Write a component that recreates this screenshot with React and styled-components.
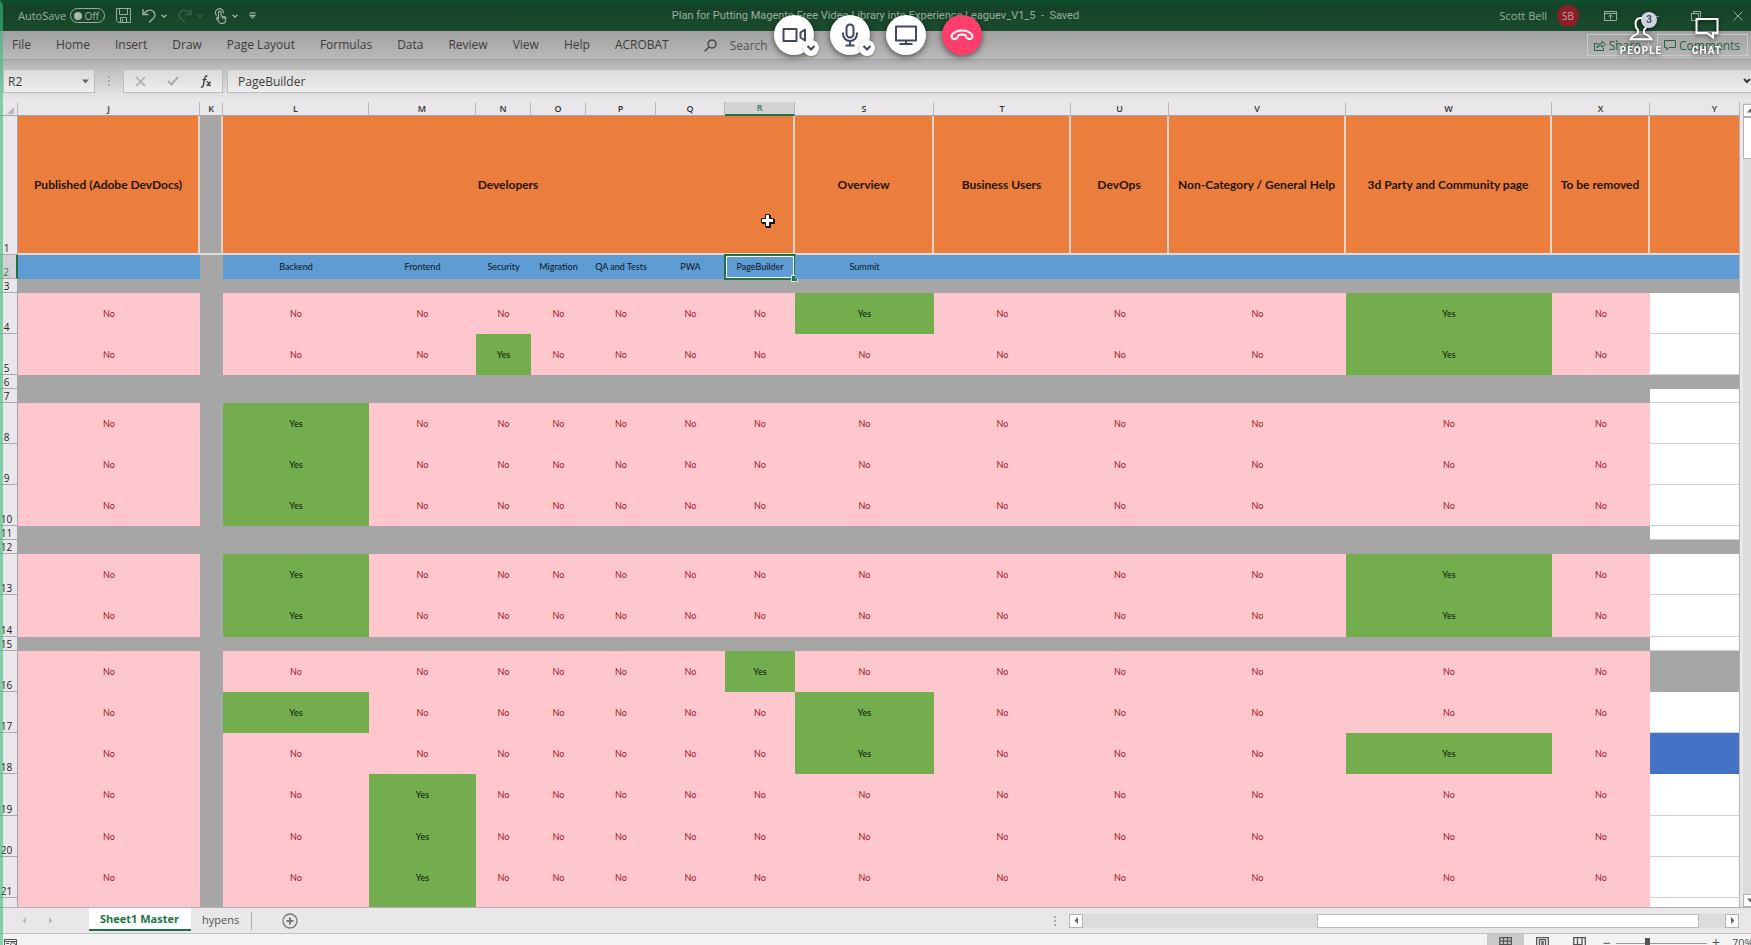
import React from "react";
import styled, { createGlobalStyle, css } from "styled-components";

const GlobalStyle = createGlobalStyle`
  *, *::before, *::after { box-sizing: border-box; }
  body { margin: 0; overflow: hidden; font-family: "Open Sans", "Noto Sans", sans-serif; font-size: 12px; color: #3c3c3c; }
  button, input { font: inherit; color: inherit; margin: 0; }
  button { background: none; border: 0; padding: 0; }
  svg { display: block; flex: none; }
`;

const Window = styled.div`
  position: relative;
  display: flex;
  flex-direction: column;
  height: 100vh;
  overflow: hidden;
  background: #e9e7ea;
`;

const ShareFrame = styled.div`
  position: absolute;
  inset: 0;
  z-index: 5;
  pointer-events: none;
  border-left: 3px solid rgba(60, 190, 125, 0.6);
  border-top: 5px solid rgba(10, 110, 60, 0.3);
`;

/* ---------- title bar ---------- */

const TitleBar = styled.header`
  display: grid;
  grid-template-columns: 1fr auto 1fr;
  align-items: center;
  height: 31px;
  flex: none;
  background: linear-gradient(#143f25, #1b4c2e);
  color: #9aaf9f;
  font-size: 11px;
  line-height: 16px;
`;

const QuickAccess = styled.div`
  display: flex;
  align-items: center;
  gap: 11px;
  padding-left: 18px;
`;

const IconPair = styled.button`
  display: flex;
  align-items: center;
  gap: 5px;
  opacity: ${(p) => (p.$dim ? 0.25 : 1)};
`;

const AutoSave = styled.label`
  display: flex;
  align-items: center;
  gap: 4px;
`;

const Switch = styled.span`
  position: relative;
  display: flex;
  align-items: center;
  justify-content: flex-end;
  width: 35px;
  height: 15px;
  padding-right: 5px;
  border: 1px solid #9aaf9f;
  border-radius: 8px;
  font-size: 10px;
  &::before {
    content: "";
    position: absolute;
    left: 3px;
    width: 8px;
    height: 8px;
    border-radius: 50%;
    background: #a9b9ae;
  }
  input { position: absolute; inset: 0; opacity: 0; }
`;

const DocTitle = styled.h1`
  margin: 0;
  font-family: Roboto, "Open Sans", sans-serif;
  font-size: 11px;
  font-weight: 400;
  white-space: pre;
`;

const Account = styled.div`
  display: flex;
  align-items: center;
  justify-content: flex-end;
  padding-right: 8px;
`;

const Avatar = styled.span`
  display: grid;
  place-items: center;
  width: 22px;
  height: 22px;
  margin: 0 25px 0 10px;
  border-radius: 50%;
  background: #8a1f28;
  color: #c39a9b;
  font-size: 10px;
`;

const WindowButtons = styled.div`
  display: flex;
  align-items: center;
  gap: 32px;
`;

/* ---------- ribbon ---------- */

const Ribbon = styled.nav`
  display: flex;
  align-items: center;
  height: 29px;
  flex: none;
  padding: 0 3px 0 0;
  background: linear-gradient(#a2a0a0, #bab9b9);
  border-bottom: 1px solid #a3a2a3;
`;

const RibbonTab = styled.button`
  padding: 0 13px 0 12px;
  line-height: 20px;
  white-space: nowrap;
`;

const SearchBox = styled.label`
  display: flex;
  align-items: center;
  gap: 13px;
  margin-left: 22px;
  input {
    width: 60px;
    padding: 0;
    border: 0;
    background: none;
    outline: 0;
  }
  input::placeholder { color: #555; opacity: 1; }
`;

const RibbonActions = styled.div`
  display: flex;
  gap: 8px;
  margin-left: auto;
`;

const ActionButton = styled.button`
  display: flex;
  align-items: center;
  gap: 3px;
  height: 22px;
  padding: 0 7px 0 6px;
  border: 1px solid #cbcaca;
  color: #1f6340;
`;

/* ---------- formula bar ---------- */

const FormulaBar = styled.div`
  display: flex;
  align-items: stretch;
  height: 42px;
  flex: none;
  padding: 9px 0 9px 3px;
  background: linear-gradient(#adacae, #bebdc0 20%, #dfdee1 78%, #e9e7ea);
`;

const field = css`
  border: 1px solid #bcbbbd;
  background: linear-gradient(#dadada, #efefef);
`;

const NameBox = styled.div`
  ${field}
  display: flex;
  align-items: center;
  width: 92px;
  padding-right: 5px;
  color: #666;
  input { width: 100%; padding: 0 0 0 4px; border: 0; background: none; outline: 0; color: #3c3c3c; }
`;

const Grip = styled.div`
  display: flex;
  flex-direction: column;
  justify-content: center;
  align-items: center;
  gap: 2px;
  width: 28px;
  i { width: 2px; height: 2px; background: #a9a9ab; }
`;

const FormulaTools = styled.div`
  ${field}
  display: flex;
  align-items: center;
  justify-content: space-between;
  width: 100px;
  padding: 0 10px 0 11px;
`;

const FormulaField = styled.div`
  ${field}
  display: flex;
  align-items: center;
  flex: 1;
  margin-left: 4px;
  border-right: 0;
  input { flex: 1; padding: 0 0 0 10px; border: 0; background: none; outline: 0; }
`;

/* ---------- grid ---------- */

const SheetArea = styled.main`
  display: flex;
  flex: 1;
  min-height: 0;
  border-bottom: 1px solid #b3b2b4;
`;

const SheetView = styled.div`
  flex: 1;
  min-width: 0;
  overflow: hidden;
  border-right: 1px solid #b5b4b6;
`;

const Table = styled.table`
  table-layout: fixed;
  width: 1780px;
  border-collapse: separate;
  border-spacing: 0;
  font-family: Lato, "Open Sans", sans-serif;
  font-size: 9px;
  line-height: 12px;
  td, th { padding: 0; overflow: hidden; white-space: nowrap; text-align: center; }
`;

const ColumnHead = styled.th`
  height: 14px;
  border-right: 1px solid #b9b8bb;
  border-bottom: ${(p) => (p.$active ? "2px solid #217346" : "1px solid #a5a4a6")};
  background: ${(p) => (p.$active ? "#d2d1d4" : "#e9e7ea")};
  color: ${(p) => (p.$active ? "#3b7b57" : "#333")};
  font-family: "Open Sans", sans-serif;
  font-weight: 600;
`;

const RowHead = styled.th`
  height: ${(p) => p.$height}px;
  && { padding-right: 4px; }
  border-right: ${(p) => (p.$active ? "2px solid #217346" : "1px solid #a5a4a6")};
  border-bottom: 1px solid #a9a8aa;
  background: ${(p) => (p.$active ? "#d2d1d4" : "#e9e7ea")};
  color: ${(p) => (p.$active ? "#3b7b57" : "#222")};
  font-family: "Open Sans", sans-serif;
  font-size: 10px;
  font-weight: 400;
  vertical-align: bottom;
`;

const GroupCell = styled.td`
  position: relative;
  border-right: 2px solid #e3d3c9;
  border-bottom: 2px solid #e2dcd9;
  background: ${(p) => (p.$blank ? "#a6a6a6" : "#eb7e3c")};
  color: #24140a;
  font-size: 12px;
  font-weight: 700;
`;

const SubCell = styled.td`
  position: relative;
  background: ${(p) => (p.$blank ? "#a6a6a6" : "#5e9cd3")};
  color: #0a1620;
  ${(p) =>
    p.$selected &&
    css`
      && { overflow: visible; }
      outline: 2px solid #217346;
      outline-offset: -1px;
      box-shadow: inset 0 0 0 2px #fff;
      &::after {
        content: "";
        position: absolute;
        right: -2px;
        bottom: -2px;
        width: 5px;
        height: 5px;
        background: #217346;
        outline: 1px solid #d9e6dd;
      }
    `}
`;

const fills = {
  no: ["#fec7ce", "#a0142a"],
  yes: ["#73ad4e", "#0a1405"],
  gray: ["#a6a6a6", "#a6a6a6"],
  blue: ["#4472c4", "#4472c4"],
  blank: ["#fff", "#333"],
};

const ValueCell = styled.td`
  background: ${(p) => fills[p.$fill][0]};
  color: ${(p) => fills[p.$fill][1]};
  ${(p) => p.$fill === "blank" && "border-bottom: 1px solid #d0d0d2;"}
`;

const MouseCross = styled.svg`
  position: absolute;
  right: 17px;
  bottom: 24px;
`;

/* ---------- scroll bars ---------- */

const VerticalBar = styled.div`
  display: flex;
  flex-direction: column;
  width: 8px;
  margin-left: 3px;
  padding-top: 2px;
  background: #dddbde;
  overflow: hidden;
`;

const ScrollButton = styled.button`
  display: grid;
  place-items: center;
  width: 14px;
  height: ${(p) => p.$height}px;
  flex: none;
  border: 1px solid #b3b2b4;
  background: #fff;
  color: #666;
`;

const VerticalThumb = styled.div`
  width: 14px;
  height: 42px;
  border: 1px solid #b3b2b4;
  background: #fff;
  margin-bottom: auto;
`;

const TabStrip = styled.footer`
  display: flex;
  align-items: center;
  height: 26px;
  flex: none;
  padding: 0 12px 0 3px;
  background: #e9e7ea;
  border-bottom: 1px solid #c1c0c2;
`;

const TabArrows = styled.div`
  display: flex;
  justify-content: space-between;
  width: 86px;
  padding: 0 35px 0 18px;
  color: #bab9bb;
`;

const SheetTab = styled.button`
  align-self: flex-start;
  height: 23px;
  padding: 0 12px 0 11px;
  font-size: 11px;
  line-height: 22px;
  white-space: nowrap;
  color: #555;
  ${(p) =>
    p.$active &&
    css`
      background: #fff;
      border-bottom: 2px solid #217346;
      color: #217346;
      font-weight: 700;
    `}
`;

const AddSheet = styled.button`
  margin-left: 30px;
  color: #77777a;
`;

const TabDivider = styled.span`
  width: 1px;
  height: 18px;
  background: #aaa9ab;
`;

const HorizontalBar = styled.div`
  display: flex;
  align-items: center;
  width: 698px;
  margin-left: auto;
`;

const HorizontalTrack = styled.div`
  display: flex;
  flex: 1;
  justify-content: flex-end;
  height: 14px;
  padding-right: 26px;
  background: #dcdcdc;
`;

const HorizontalThumb = styled.div`
  width: 62%;
  border: 1px solid #b9b8ba;
  background: #fff;
`;

const StatusBar = styled.div`
  display: flex;
  align-items: flex-start;
  justify-content: flex-end;
  height: 11px;
  flex: none;
  overflow: hidden;
  padding: 0 0 0 4px;
  background: #f4f3f3;
  color: #555;
  white-space: nowrap;
`;

const MacroButton = styled.button`
  margin: 4px auto 0 0;
`;

const ViewButton = styled.button`
  display: grid;
  justify-items: center;
  width: 37px;
  height: 22px;
  padding-top: 3px;
  align-content: start;
  background: ${(p) => (p.$active ? "#c9c8ca" : "none")};
`;

const ZoomButton = styled.button`
  width: 18px;
  height: 18px;
  line-height: 18px;
  font-size: 14px;
`;

const ZoomSlider = styled.input`
  appearance: none;
  width: 91px;
  height: 18px;
  background: linear-gradient(#999, #999) center / 100% 1px no-repeat;
  &::-webkit-slider-thumb {
    appearance: none;
    width: 5px;
    height: 10px;
    background: #555;
  }
`;

const ZoomValue = styled.span`
  width: 26px;
  padding-left: 7px;
  line-height: 18px;
  font-size: 11px;
`;

/* ---------- call overlay ---------- */

const CallControls = styled.div`
  position: absolute;
  z-index: 10;
  top: 15px;
  left: 0;
  right: 0;
  display: flex;
  justify-content: center;
  gap: 16px;
  padding-left: 4px;
  pointer-events: none;
`;

const CallItem = styled.div`
  position: relative;
  pointer-events: auto;
`;

const CallButton = styled.button`
  display: grid;
  place-items: center;
  width: 40px;
  height: 40px;
  border-radius: 50%;
  background: ${(p) => (p.$danger ? "#ff3e6c" : "#fff")};
  color: ${(p) => (p.$danger ? "#fff" : "#3f4a5c")};
  box-shadow: 0 2px 6px rgba(0, 0, 0, 0.55);
`;

const CallOptions = styled.button`
  position: absolute;
  right: -5px;
  bottom: -1px;
  display: grid;
  place-items: center;
  width: 16px;
  height: 16px;
  border-radius: 50%;
  background: #fff;
  color: #3f4a5c;
  box-shadow: 0 1px 3px rgba(0, 0, 0, 0.35);
`;

const SidePanelButtons = styled.div`
  position: absolute;
  z-index: 10;
  top: 16px;
  right: 24px;
  display: flex;
  gap: 26px;
`;

const PanelButton = styled.button`
  position: relative;
  display: flex;
  flex-direction: column;
  align-items: center;
  width: 40px;
  color: #fff;
  font-family: Roboto, sans-serif;
  font-size: 10px;
  font-weight: 700;
  letter-spacing: 1px;
  line-height: 12px;
  gap: 3px;
  filter: drop-shadow(0 1px 2px rgba(0, 0, 0, 0.7));
`;

const Badge = styled.span`
  position: absolute;
  top: -4px;
  right: 4px;
  width: 16px;
  height: 16px;
  border-radius: 50%;
  background: #cdd5e0;
  color: #3f4a5c;
  font-size: 10px;
  letter-spacing: 0;
  line-height: 16px;
`;

/* ---------- icons ---------- */

const Icon = ({ w = 16, h = w, box, sw = 1, children, fill = "none" }) => (
  <svg width={w} height={h} viewBox={box || `0 0 ${w} ${h}`} fill={fill} stroke={fill === "none" ? "currentColor" : "none"} strokeWidth={sw} aria-hidden="true">
    {children}
  </svg>
);

const Triangle = ({ dir = "down", w = 7 }) => {
  const d = { down: "M0 1.5h7L3.5 5.5z", up: "M0 5.5h7L3.5 1.5z", left: "M5 0v7L1.5 3.5z", right: "M2 0v7l3.5-3.5z" }[dir];
  return <Icon w={w} box="0 0 7 7" fill="currentColor"><path d={d} /></Icon>;
};

const Caret = () => <Icon w={6} h={4} sw={1.4}><path d="M.5.7 3 3.2 5.5.7" /></Icon>;

/* ---------- data ---------- */

const columns = [
  ["J", 182], ["K", 23], ["L", 146], ["M", 107], ["N", 55], ["O", 55], ["P", 70], ["Q", 69],
  ["R", 70], ["S", 139], ["T", 137], ["U", 98], ["V", 177], ["W", 206], ["X", 98], ["Y", 130],
];

const groups = [
  ["Published (Adobe DevDocs)", 1], ["", 1, true], ["Developers", 7], ["Overview", 1], ["Business Users", 1],
  ["DevOps", 1], ["Non-Category / General Help", 1], ["3d Party and Community page", 1], ["To be removed", 1], ["", 1],
];

const subheads = {
  L: "Backend", M: "Frontend", N: "Security", O: "Migration", P: "QA and Tests", Q: "PWA", R: "PageBuilder", S: "Summit",
};

const rows = [
  { n: 3, band: true, y: "gray" },
  { n: 4, yes: "SW" },
  { n: 5, yes: "NW" },
  { n: 6, band: true, y: "gray" },
  { n: 7, band: true },
  { n: 8, yes: "L" },
  { n: 9, yes: "L" },
  { n: 10, yes: "L" },
  { n: 11, band: true },
  { n: 12, band: true, y: "gray" },
  { n: 13, yes: "LW" },
  { n: 14, yes: "LW", height: 42 },
  { n: 15, band: true },
  { n: 16, yes: "R", y: "gray" },
  { n: 17, yes: "LS" },
  { n: 18, yes: "SW", y: "blue" },
  { n: 19, yes: "M", height: 42 },
  { n: 20, yes: "M" },
  { n: 21, yes: "M" },
  { n: 22, yes: "M" },
];

const fillOf = (row, col) => {
  if (col === "Y") return row.y || "blank";
  if (col === "K" || row.band) return "gray";
  return row.yes.includes(col) ? "yes" : "no";
};

const labels = { yes: "Yes", no: "No" };

const ribbonTabs = ["File", "Home", "Insert", "Draw", "Page Layout", "Formulas", "Data", "Review", "View", "Help", "ACROBAT"];

/* ---------- sections ---------- */

function TopBar() {
  return (
    <TitleBar>
      <QuickAccess>
        <AutoSave>
          AutoSave
          <Switch><input type="checkbox" aria-label="AutoSave" />Off</Switch>
        </AutoSave>
        <IconPair aria-label="Save">
          <Icon w={15}><path d="M.5.5h14v14h-12l-2-2zM3.5.5v6h8v-6M4.5 14.5v-5h6v5M6.5 11v3.500" /></Icon>
        </IconPair>
        <IconPair aria-label="Undo">
          <Icon w={14} h={15} sw={1.4}><path d="M1 1v5.500h5.500M1.300 6.300C4 2.500 8 1 11 3.200c2.500 2 2.500 5 .5 7L7 14.500" /></Icon>
          <Caret />
        </IconPair>
        <IconPair aria-label="Redo" $dim>
          <Icon w={14} h={15} sw={1.4}><path d="M13 1v5.500H7.500M12.700 6.300C10 2.500 6 1 3 3.200c-2.500 2-2.500 5-.5 7L7 14.500" /></Icon>
          <Caret />
        </IconPair>
        <IconPair aria-label="Touch mode">
          <Icon w={13} h={16} sw={1.2}>
            <path d="M4.500 11.500V4.500a1.300 1.300 0 0 1 2.600 0V8l3.400.7c1.200.3 1.500 1 1.300 2l-.6 3c-.2 1-1 1.700-2 1.700H7c-1 0-1.500-.4-2-1.200L2.500 10.800c-.5-1 .6-1.700 1.300-1zM2.500 7.500A4 4 0 1 1 9.300 5.500M8.500 9v2M10.200 9.300v1.700" />
          </Icon>
          <Caret />
        </IconPair>
        <IconPair aria-label="Customize Quick Access Toolbar">
          <Icon w={7} h={7} sw={1.2}><path d="M.5.8h6M1 3.300l2.500 2.500L6 3.300z" /></Icon>
        </IconPair>
      </QuickAccess>
      <DocTitle>{"Plan for Putting Magento Free Video Library into Experience Leaguev_V1_5  -  Saved"}</DocTitle>
      <Account>
        Scott Bell
        <Avatar>SB</Avatar>
        <WindowButtons>
          <button aria-label="Ribbon display options">
            <Icon w={13} h={10}><path d="M.5.5h12v9H.5zM.5 2.500h12M6.500 8.500v-4.500M4.500 5.800l2-2 2 2" /></Icon>
          </button>
          <button aria-label="Minimize"><Icon w={10}><path d="M0 5.500h10" /></Icon></button>
          <button aria-label="Restore"><Icon w={10}><path d="M.5 2.500h7v7h-7zM2.500 2.500v-2h7v7h-2" /></Icon></button>
          <button aria-label="Close"><Icon w={10}><path d="m.5.5 9 9M9.500.5l-9 9" /></Icon></button>
        </WindowButtons>
      </Account>
    </TitleBar>
  );
}

function RibbonBar() {
  return (
    <Ribbon>
      {ribbonTabs.map((t) => <RibbonTab key={t}>{t}</RibbonTab>)}
      <SearchBox>
        <Icon w={13} sw={1.3}><circle cx="8" cy="5" r="4" /><path d="M5 8 .7 12.300" /></Icon>
        <input placeholder="Search" aria-label="Search" />
      </SearchBox>
      <RibbonActions>
        <ActionButton>
          <Icon w={12} h={11}><path d="M4 3.500H.5v7h9V8M3 8c.3-3 2-4.500 5-4.500V1l3.500 3.500L8 7.500V5.500C5.500 5.500 4 6.300 3 8z" /></Icon>
          Share
        </ActionButton>
        <ActionButton>
          <Icon w={12} h={11}><path d="M.5.5h11v7H5L2.500 10V7.500h-2z" /></Icon>
          Comments
        </ActionButton>
      </RibbonActions>
    </Ribbon>
  );
}

function Formula() {
  return (
    <FormulaBar>
      <NameBox><input aria-label="Name box" defaultValue="R2" /><Triangle /></NameBox>
      <Grip><i /><i /><i /></Grip>
      <FormulaTools>
        <button aria-label="Cancel"><Icon w={11} sw={1.5}><path d="m1 1 9 9M10 1l-9 9" stroke="#aaa" /></Icon></button>
        <button aria-label="Enter"><Icon w={12} h={10} sw={2}><path d="m1 5 3.500 3.500L11 1" stroke="#aaa" /></Icon></button>
        <button aria-label="Insert function">
          <Icon w={12} h={13} sw={1.3}><path d="M7.500 1.200C5.500.5 5 2 4.600 4L3.300 10.500C3 12 2 12.500.8 12M2.500 4.700h4M6.500 7c1.500-.5 1.500 0 2 1.800s.8 2 2.200 1.400M11 7c-1.500 0-2.500 3.500-4.500 3.500" /></Icon>
        </button>
      </FormulaTools>
      <FormulaField>
        <input aria-label="Formula bar" defaultValue="PageBuilder" />
        <button aria-label="Expand formula bar"><Icon w={8} h={6} sw={2}><path d="m1 1 3 3 3-3" /></Icon></button>
      </FormulaField>
    </FormulaBar>
  );
}

function Sheet() {
  return (
    <SheetArea>
      <SheetView>
        <Table>
          <colgroup>
            <col width="18" />
            {columns.map(([c, w]) => <col key={c} width={w} />)}
          </colgroup>
          <thead>
            <tr>
              <ColumnHead aria-label="Select all">
                <Icon w={17} h={12} fill="#b7b6b8"><path d="M14 4v7H7z" /></Icon>
              </ColumnHead>
              {columns.map(([c]) => <ColumnHead key={c} $active={c === "R"}>{c}</ColumnHead>)}
            </tr>
          </thead>
          <tbody>
            <tr>
              <RowHead $height={139}>1</RowHead>
              {groups.map(([text, span, blank], i) => (
                <GroupCell key={i} colSpan={span} $blank={blank}>
                  {text}
                  {text === "Developers" && (
                    <MouseCross width="16" height="16" viewBox="0 0 16 16" aria-hidden="true">
                      <path d="M6 2h5v4h4v5h-4v4H6v-4H2V6h4z" fill="#1b120c" />
                      <path d="M5.500 1.500h4v4h4v4h-4v4h-4v-4h-4v-4h4z" fill="#fff" stroke="#1b120c" />
                    </MouseCross>
                  )}
                </GroupCell>
              ))}
            </tr>
            <tr>
              <RowHead $height={24} $active>2</RowHead>
              {columns.map(([c]) => (
                <SubCell key={c} $blank={c === "K"} $selected={c === "R"}>{subheads[c]}</SubCell>
              ))}
            </tr>
            {rows.map((row) => (
              <tr key={row.n}>
                <RowHead $height={row.height || (row.band ? 14 : 41)}>{row.n === 22 ? "" : row.n}</RowHead>
                {columns.map(([c]) => {
                  const fill = fillOf(row, c);
                  return <ValueCell key={c} $fill={fill}>{row.n === 22 ? "" : labels[fill]}</ValueCell>;
                })}
              </tr>
            ))}
          </tbody>
        </Table>
      </SheetView>
      <VerticalBar>
        <ScrollButton $height={13} aria-label="Scroll up"><Triangle dir="up" /></ScrollButton>
        <VerticalThumb />
        <ScrollButton $height={13} aria-label="Scroll down"><Triangle /></ScrollButton>
      </VerticalBar>
    </SheetArea>
  );
}

function BottomBars() {
  return (
    <>
      <TabStrip>
        <TabArrows><Triangle dir="left" /><Triangle dir="right" /></TabArrows>
        <SheetTab $active>Sheet1 Master</SheetTab>
        <SheetTab>hypens</SheetTab>
        <TabDivider />
        <AddSheet aria-label="New sheet">
          <Icon w={16} sw={1.3}><circle cx="8" cy="8" r="7" /><path d="M8 4.500v7M4.500 8h7" strokeWidth="2" /></Icon>
        </AddSheet>
        <HorizontalBar>
          <Grip><i /><i /><i /></Grip>
          <ScrollButton $height={14} aria-label="Scroll left"><Triangle dir="left" /></ScrollButton>
          <HorizontalTrack><HorizontalThumb /></HorizontalTrack>
          <ScrollButton $height={14} aria-label="Scroll right"><Triangle dir="right" /></ScrollButton>
        </HorizontalBar>
      </TabStrip>
      <StatusBar>
        <MacroButton aria-label="Record macro">
          <Icon w={13} h={12}><path d="M.5 1.500h12v9H.5zM.5 3.500h12M2 5.500h3M2 7.500h3" /><circle cx="9" cy="7" r="2.500" /></Icon>
        </MacroButton>
        <ViewButton $active aria-label="Normal view">
          <Icon w={13} h={12} sw={1.3}><path d="M.7.7h11.600v10.600H.7zM.7 4.200h11.600M.7 7.700h11.600M4.500.7v10.600M8.500.7v10.600" /></Icon>
        </ViewButton>
        <ViewButton aria-label="Page layout view">
          <Icon w={13} h={12} sw={1.3}><path d="M.7.7h11.600v10.600H.7zM3.500 2.700h6v8h-6zM5 5h3M5 7h3" /></Icon>
        </ViewButton>
        <ViewButton aria-label="Page break view">
          <Icon w={13} h={12} sw={1.3}><path d="M.7 11.300V.7h11.600v10.600M4.500.7v7h4.500v-7M.7 7.700h3.800" /></Icon>
        </ViewButton>
        <ZoomButton aria-label="Zoom out">−</ZoomButton>
        <ZoomSlider type="range" aria-label="Zoom" min="10" max="190" defaultValue="70" />
        <ZoomButton aria-label="Zoom in">+</ZoomButton>
        <ZoomValue>70%</ZoomValue>
      </StatusBar>
    </>
  );
}

const Chevron = () => <Icon w={8} h={6} sw={2}><path d="m.5 1 3.500 3.500L7.500 1" /></Icon>;

function CallOverlay() {
  return (
    <>
      <CallControls>
        <CallItem>
          <CallButton aria-label="Camera">
            <Icon w={24} h={16} sw={2}><path d="M1.500 2h13v12h-13zM23 2.500v11L18.500 10.500v-5z" strokeLinejoin="round" /></Icon>
          </CallButton>
          <CallOptions aria-label="Camera options"><Chevron /></CallOptions>
        </CallItem>
        <CallItem>
          <CallButton aria-label="Microphone">
            <Icon w={18} h={24} sw={2}><path d="M9 1.500a3.500 3.500 0 0 1 3.500 3.500v6a3.500 3.500 0 0 1-7 0V5A3.500 3.500 0 0 1 9 1.500zM2 9.500v1.500a7 7 0 0 0 14 0V9.500M9 18v4.500M4.500 22.500h9" /></Icon>
          </CallButton>
          <CallOptions aria-label="Microphone options"><Chevron /></CallOptions>
        </CallItem>
        <CallItem>
          <CallButton aria-label="Share screen">
            <Icon w={24} h={20} sw={2}><path d="M2 1.500h20v14H2zM12 15.500V19M5.500 19h13" strokeLinejoin="round" /></Icon>
          </CallButton>
        </CallItem>
        <CallItem>
          <CallButton $danger aria-label="Hang up">
            <Icon w={24} h={12} sw={2}><path d="M12 1.500C7.500 1.500 4 3 2 5.800 1 7.300 1.800 9.500 3.200 9.900c.8.200 3.100-.3 3.800-.7 1-.6.700-2.500 1.300-2.800 1.800-.8 5.600-.8 7.400 0 .6.300.3 2.200 1.300 2.800.7.400 3 .9 3.800.7 1.400-.4 2.200-2.600 1.200-4.100C20 3 16.500 1.500 12 1.500z" strokeLinejoin="round" /></Icon>
          </CallButton>
        </CallItem>
      </CallControls>
      <SidePanelButtons>
        <PanelButton>
          <Icon w={24} h={26} sw={2}><path d="M12 2c-3.600 0-5.500 2.500-5.500 6 0 2.700 1 4.600 2.500 6v3c0 1.500-6.500 2-7.500 6.300h21C21.500 19 15 18.500 15 17v-3c1.500-1.400 2.500-3.300 2.500-6 0-3.500-1.900-6-5.500-6z" /></Icon>
          PEOPLE
          <Badge>3</Badge>
        </PanelButton>
        <PanelButton>
          <Icon w={24} h={26} sw={2}><path d="M1.500 3h21v14h-4.500v4.500L12 17H1.500z" /></Icon>
          CHAT
        </PanelButton>
      </SidePanelButtons>
    </>
  );
}

export default function App() {
  return (
    <>
      <GlobalStyle />
      <Window>
        <TopBar />
        <RibbonBar />
        <Formula />
        <Sheet />
        <BottomBars />
        <ShareFrame />
        <CallOverlay />
      </Window>
    </>
  );
}
